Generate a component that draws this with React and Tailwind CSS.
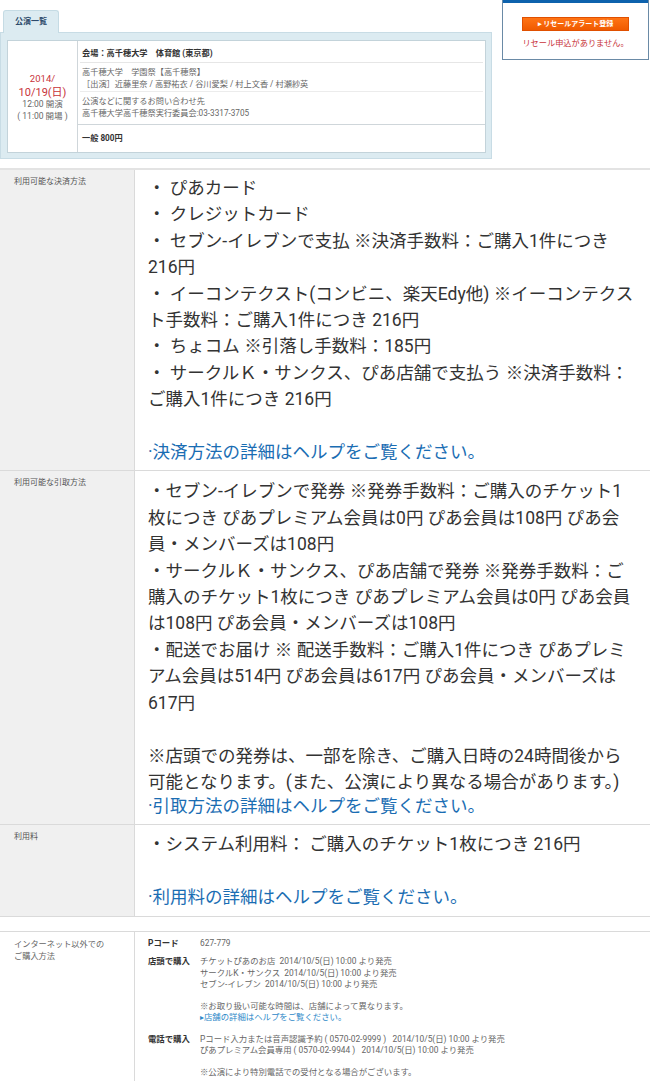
import React from "react";

const Big = ({ children }) => (
  <div className="whitespace-nowrap">{children}</div>
);
const Blank = () => <div className="h-[26.4px]" />;

const Label = ({ children }) => (
  <div className="w-[135px] shrink-0 bg-[#f0f0f0] border-r border-[#dadada] pl-[14px] pt-[6px] text-[8px] leading-[12px] text-[#555]">
    {children}
  </div>
);

export default function App() {
  return (
    <div className="w-[650px] h-[1081px] overflow-hidden bg-white font-['Roboto','Noto_Sans_CJK_JP',sans-serif] text-[#333]">
      {/* top area */}
      <div className="flex items-start">
        <div className="w-[492px] pt-[10px]">
          <div className="ml-[3px] w-[56px] h-[23px] -mb-px relative bg-[#dcebf1] border border-b-0 border-[#c5dbe4] rounded-t-[3px] flex items-center justify-center text-[8px] font-bold text-[#2c4a6b]">
            公演一覧
          </div>
          <div className="h-[127px] bg-[#dcebf1] border border-[#c8dce5] pl-[6px] pr-[5px] pt-[7px]">
            <div className="h-[113px] bg-white border border-[#c3d3da] flex">
              <div className="w-[70px] shrink-0 border-r border-[#cfd6da] flex flex-col items-center justify-center pt-[2px]">
                <div className="text-[9.5px] leading-[14px] text-[#c8333a]">2014/</div>
                <div className="text-[11px] leading-[13px] text-[#c8333a]">10/19(日)</div>
                <div className="text-[8.5px] leading-[11px] text-[#666]">12:00 開演</div>
                <div className="text-[8.5px] leading-[13px] text-[#666]">( 11:00 開場 )</div>
              </div>
              <div className="flex-1 flex flex-col">
                <div className="h-[22px] mx-[2px] border-b border-[#e6e6e6] flex items-center pl-[2px] pt-[3px] text-[8.2px] font-bold text-[#333]">
                  会場：高千穂大学　体育館 (東京都)
                </div>
                <div className="h-[29px] mx-[2px] border-b border-[#ececec] pl-[2px] pt-[3px] text-[8.2px] leading-[12px] text-[#666]">
                  <div>高千穂大学　学園祭【高千穂祭】</div>
                  <div>［出演］近藤里奈 / 高野祐衣 / 谷川愛梨 / 村上文香 / 村瀬紗英</div>
                </div>
                <div className="h-[33px] border-b border-[#cfd6da] pl-[4px] pt-[3px] text-[8.2px] leading-[12px] text-[#666]">
                  <div>公演などに関するお問い合わせ先</div>
                  <div>高千穂大学高千穂祭実行委員会:03-3317-3705</div>
                </div>
                <div className="flex-1 flex items-center pl-[4px] text-[8.2px] font-bold text-[#333]">
                  一般 800円
                </div>
              </div>
            </div>
          </div>
        </div>
        <div className="ml-[10px] w-[147px] h-[60px] border border-t-0 border-[#6a8aa6] bg-white">
          <div className="h-[3px] bg-[#0d62ad]" />
          <div className="flex flex-col items-center pt-[14px]">
            <div className="w-[107px] h-[14px] bg-gradient-to-b from-[#ff7414] to-[#f05a00] border border-[#e05000] flex items-center justify-center text-[7px] font-bold text-white">
              ▸ リセールアラート登録
            </div>
            <div className="mt-[6px] text-[8.2px] text-[#c8333a]">リセール申込がありません。</div>
          </div>
        </div>
      </div>

      {/* main table */}
      <div className="mt-[9px] border-t-2 border-[#e3e3e3]">
        <div className="flex border-b border-[#dadada]">
          <Label>利用可能な決済方法</Label>
          <div className="flex-1 pl-[13px] pt-[5px] pb-[5px] text-[17.5px] leading-[26.4px]">
            <Big>・ ぴあカード</Big>
            <Big>・ クレジットカード</Big>
            <Big>・ セブン-イレブンで支払 ※決済手数料：ご購入1件につき</Big>
            <Big>216円</Big>
            <Big>・ イーコンテクスト(コンビニ、楽天Edy他) ※イーコンテクス</Big>
            <Big>ト手数料：ご購入1件につき 216円</Big>
            <Big>・ ちょコム ※引落し手数料：185円</Big>
            <Big>・ サークルＫ・サンクス、ぴあ店舗で支払う ※決済手数料：</Big>
            <Big>ご購入1件につき 216円</Big>
            <Blank />
            <div className="whitespace-nowrap text-[#1a6db3]">·決済方法の詳細はヘルプをご覧ください。</div>
          </div>
        </div>

        <div className="flex border-b border-[#dadada]">
          <Label>利用可能な引取方法</Label>
          <div className="flex-1 pl-[13px] pt-[7px] pb-[4px] text-[17.5px] leading-[26.4px]">
            <Big>・セブン-イレブンで発券 ※発券手数料：ご購入のチケット1</Big>
            <Big>枚につき ぴあプレミアム会員は0円 ぴあ会員は108円 ぴあ会</Big>
            <Big>員・メンバーズは108円</Big>
            <Big>・サークルＫ・サンクス、ぴあ店舗で発券 ※発券手数料：ご</Big>
            <Big>購入のチケット1枚につき ぴあプレミアム会員は0円 ぴあ会員</Big>
            <Big>は108円 ぴあ会員・メンバーズは108円</Big>
            <Big>・配送でお届け ※ 配送手数料：ご購入1件につき ぴあプレミ</Big>
            <Big>アム会員は514円 ぴあ会員は617円 ぴあ会員・メンバーズは</Big>
            <Big>617円</Big>
            <Blank />
            <Big>※店頭での発券は、一部を除き、ご購入日時の24時間後から</Big>
            <Big>可能となります。(また、公演により異なる場合があります。)</Big>
            <div className="whitespace-nowrap text-[#1a6db3] -mt-[2px]">·引取方法の詳細はヘルプをご覧ください。</div>
          </div>
        </div>

        <div className="flex border-b border-[#dadada]">
          <Label>利用料</Label>
          <div className="flex-1 pl-[13px] pt-[6px] pb-[6px] text-[17.5px] leading-[26.4px]">
            <Big>・システム利用料： ご購入のチケット1枚につき 216円</Big>
            <Blank />
            <div className="whitespace-nowrap text-[#1a6db3]">·利用料の詳細はヘルプをご覧ください。</div>
          </div>
        </div>
      </div>

      {/* other purchase methods */}
      <div className="mt-[14px] border-t border-[#dadada] flex h-[160px]">
        <div className="w-[135px] shrink-0 border-r border-[#dadada] pl-[14px] pt-[6px] text-[8.2px] leading-[12.5px] text-[#666]">
          <div>インターネット以外での</div>
          <div>ご購入方法</div>
        </div>
        <div className="flex-1 pl-[13px] pt-[6px] text-[8.4px] leading-[11.3px] text-[#666]">
          <div className="flex">
            <div className="w-[52px] shrink-0 font-bold text-[#333]">Pコード</div>
            <div>627-779</div>
          </div>
          <div className="flex mt-[7px]">
            <div className="w-[52px] shrink-0 font-bold text-[#333]">店頭で購入</div>
            <div className="whitespace-nowrap">
              <div>チケットぴあのお店&nbsp;&nbsp;2014/10/5(日) 10:00 より発売</div>
              <div>サークルK・サンクス&nbsp;&nbsp;2014/10/5(日) 10:00 より発売</div>
              <div>セブン-イレブン&nbsp;&nbsp;2014/10/5(日) 10:00 より発売</div>
              <div className="h-[11px]" />
              <div>※お取り扱い可能な時間は、店舗によって異なります。</div>
              <div className="text-[#2d88c8]">▸店舗の詳細はヘルプをご覧ください。</div>
            </div>
          </div>
          <div className="flex mt-[10px]">
            <div className="w-[52px] shrink-0 font-bold text-[#333]">電話で購入</div>
            <div className="whitespace-nowrap">
              <div>Pコード入力または音声認識予約 ( 0570-02-9999 )&nbsp;&nbsp;&nbsp;2014/10/5(日) 10:00 より発売</div>
              <div>ぴあプレミアム会員専用 ( 0570-02-9944 )&nbsp;&nbsp;&nbsp;2014/10/5(日) 10:00 より発売</div>
              <div className="h-[11px]" />
              <div>※公演により特別電話での受付となる場合がございます。</div>
            </div>
          </div>
        </div>
      </div>
    </div>
  );
}
